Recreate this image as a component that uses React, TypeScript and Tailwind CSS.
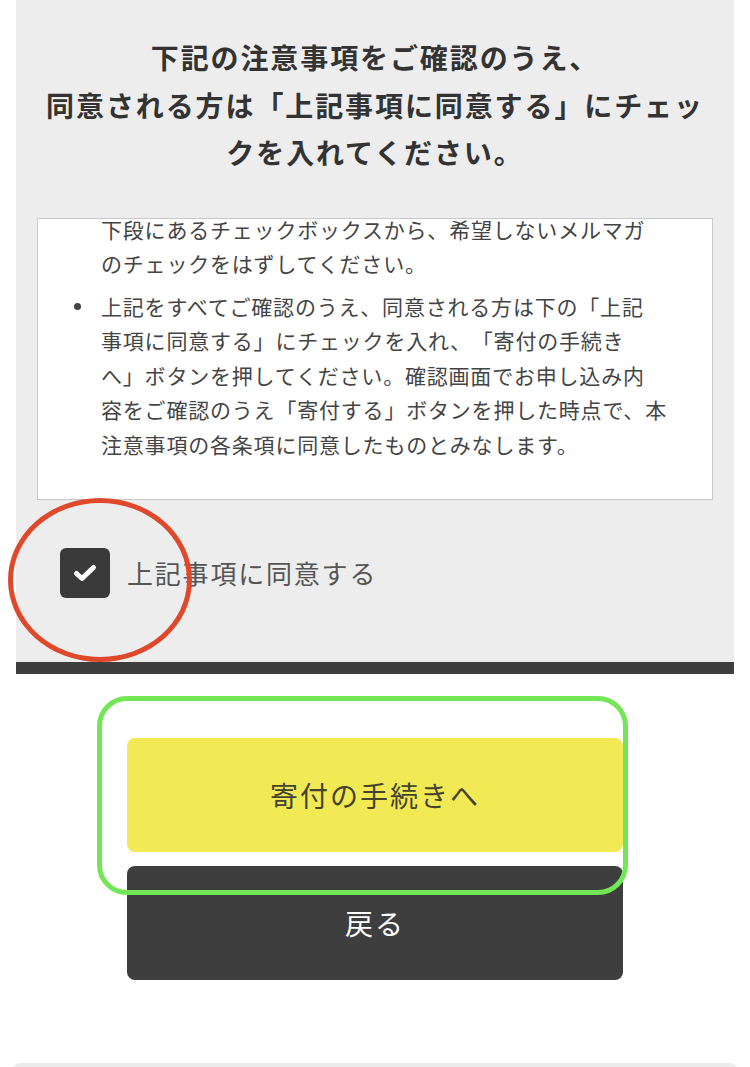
const font = { fontFamily: '"Noto Sans CJK JP", "Noto Sans", sans-serif' };

function CheckIcon() {
    return (
        <svg width="26" height="20" viewBox="0 0 26 20" fill="none">
            <path
                d="M4.5 10.5 L10 15.5 L21.5 4.5"
                stroke="white"
                strokeWidth="5"
                strokeLinecap="round"
                strokeLinejoin="round"
            />
        </svg>
    );
}

function NoticeItem({ lines, showDot = true }: { lines: string[]; showDot?: boolean }) {
    return (
        <li className="flex">
            <span className="w-[63px] shrink-0">
                {showDot && (
                    <span className="mt-[14px] ml-[36px] block size-[7px] rounded-full bg-[#444]" />
                )}
            </span>
            <div>
                {lines.map((line) => (
                    <div key={line} className="whitespace-nowrap">
                        {line}
                    </div>
                ))}
            </div>
        </li>
    );
}

export default function App() {
    return (
        <div className="relative min-h-[1067px] bg-white [text-spacing-trim:space-all]" style={font}>
            {/* Notice panel */}
            <div className="mx-4 bg-[#ededed]">
                <h1 className="pt-[34px] text-center text-[28px] font-bold leading-[47.5px] tracking-[1.9px] text-[#333]">
                    下記の注意事項をご確認のうえ、
                    <br />
                    同意される方は「上記事項に同意する」にチェッ
                    <br />
                    クを入れてください。
                </h1>

                {/* scrolled notice box, first lines are clipped at the top */}
                <div className="mx-[21px] mt-[41px] h-[282px] overflow-hidden border border-[#c9c9c9] bg-white">
                    <ul className="-mt-[7px] flex flex-col gap-[8px] text-[21px] leading-[34.5px] tracking-[0.8px] text-[#444]">
                        <NoticeItem
                            showDot={false}
                            lines={[
                                "下段にあるチェックボックスから、希望しないメルマガ",
                                "のチェックをはずしてください。",
                            ]}
                        />
                        <NoticeItem
                            lines={[
                                "上記をすべてご確認のうえ、同意される方は下の「上記",
                                "事項に同意する」にチェックを入れ、「寄付の手続き",
                                "へ」ボタンを押してください。確認画面でお申し込み内",
                                "容をご確認のうえ「寄付する」ボタンを押した時点で、本",
                                "注意事項の各条項に同意したものとみなします。",
                            ]}
                        />
                    </ul>
                </div>

                <label className="flex items-center gap-[17px] pt-[48px] pb-[64px] pl-[44px]">
                    <span className="flex size-[50px] items-center justify-center rounded-[6px] bg-[#3a3a3a]">
                        <CheckIcon />
                    </span>
                    <span className="text-[26px] tracking-[1.8px] text-[#555]">上記事項に同意する</span>
                </label>
            </div>
            <div className="mx-4 h-[12px] bg-[#3e3e3e]" />

            {/* Buttons */}
            <div className="mx-auto mt-[64px] flex w-[496px] flex-col gap-[14px]">
                <button className="h-[114px] rounded-[8px] bg-[#f2ea55] text-[28px] tracking-[2px] text-[#45432a]">
                    寄付の手続きへ
                </button>
                <button className="h-[114px] rounded-[8px] bg-[#3e3e3e] text-[28px] tracking-[2px] text-white">
                    戻る
                </button>
            </div>

            <div className="mx-[12px] mt-[83px] h-[10px] rounded-t-[8px] bg-[#ececec]" />

            {/* Annotations */}
            <div className="pointer-events-none absolute top-[498px] left-[8px] h-[164px] w-[184px] rounded-[50%] border-[5px] border-[#e0482c]" />
            <div className="pointer-events-none absolute top-[696px] left-[97px] h-[199px] w-[531px] rounded-[30px] border-[5px] border-[#72e655]" />
        </div>
    );
}
